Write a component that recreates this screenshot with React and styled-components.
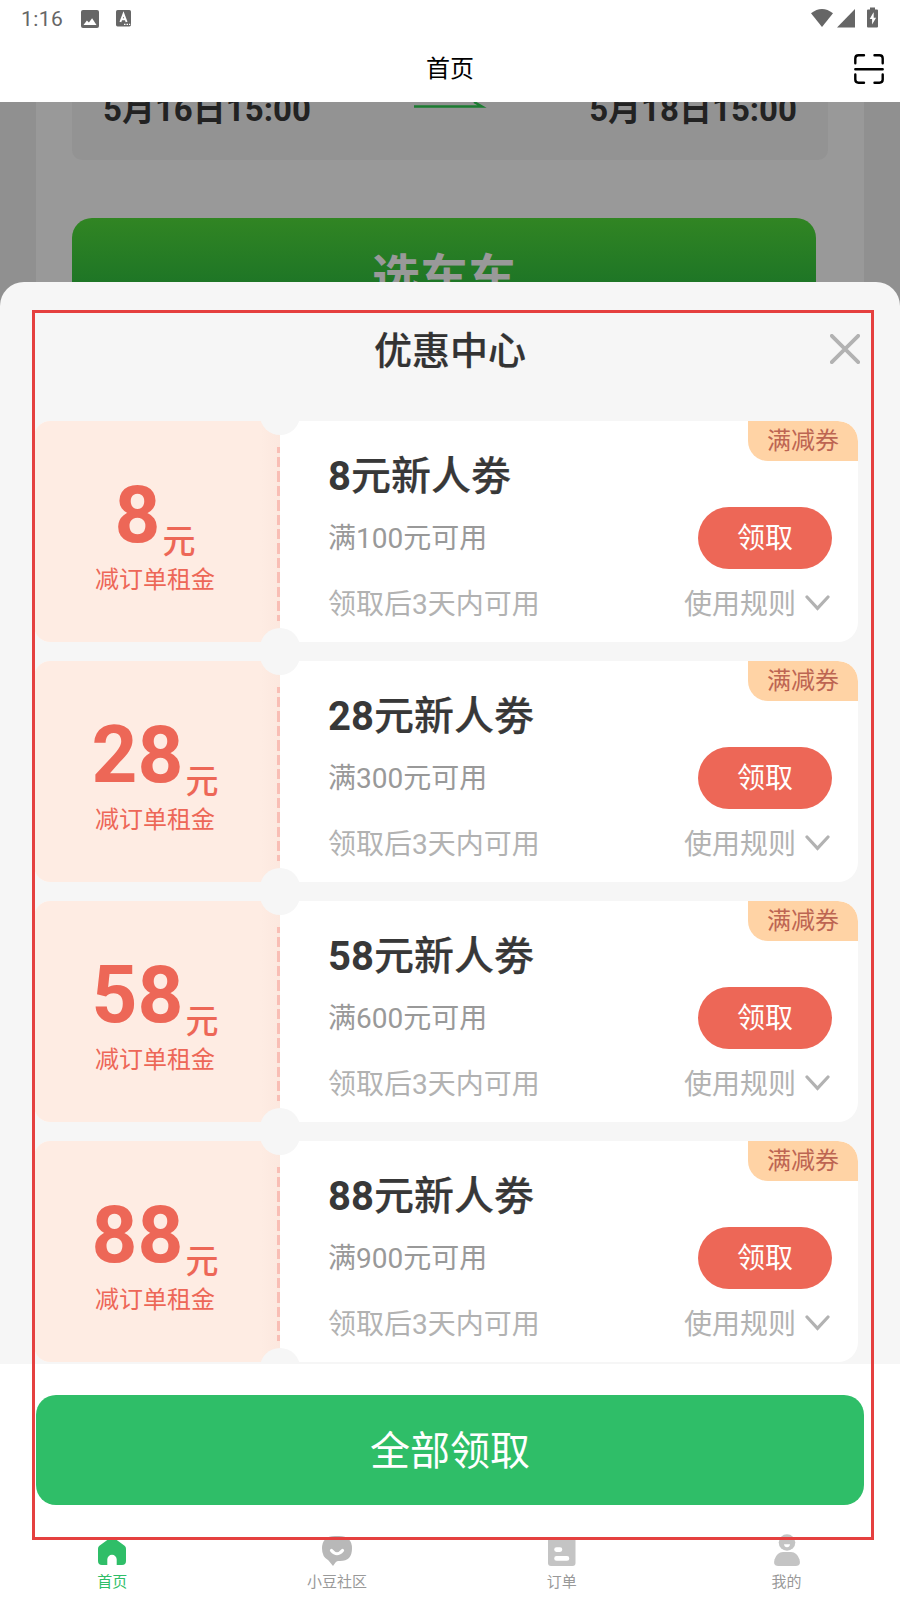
import styled, { createGlobalStyle } from "styled-components";

const GlobalStyle = createGlobalStyle`
  * {
    box-sizing: border-box;
  }

  body {
    margin: 0;
    font-family: Roboto, "Noto Sans CJK SC", sans-serif;
  }
`;

const Phone = styled.div`
  position: relative;
  display: flex;
  flex-direction: column;
  width: 900px;
  height: 1600px;
  overflow: hidden;
  background-color: white;
`;

const StatusBar = styled.div`
  display: flex;
  align-items: center;
  justify-content: space-between;
  height: 37px;
  padding: 0 21px;
  color: #666;
  font-size: 21px;
  letter-spacing: 0.4px;

  .group {
    display: flex;
    align-items: center;
    gap: 17px;
  }

  svg {
    display: block;
  }

  > svg {
    margin-top: -2px;
  }

  .group span {
    margin-right: 1px;
  }
`;

const NavBar = styled.div`
  display: grid;
  grid-template-columns: 1fr auto 1fr;
  align-items: center;
  height: 65px;
  padding: 0 16px;

  .title {
    margin-top: -2px;
    font-size: 24px;
    line-height: 64px;
  }

  svg {
    justify-self: end;
    margin-top: -1px;
  }
`;

const Page = styled.div`
  height: 180px;
  padding: 0 36px;
  overflow: hidden;
  background-color: #909090;
`;

const OrderCard = styled.div`
  height: 180px;
  padding: 0 36px;
  background-color: #999;
`;

const DateRow = styled.div`
  display: flex;
  justify-content: space-between;
  width: 756px;
  height: 58px;
  padding: 0 31px;
  border-radius: 0 0 10px 10px;
  background-color: #939393;
  color: #222;
  font-size: 33px;
  font-weight: bold;

  span {
    height: 40px;
    margin-top: -12px;
    line-height: 40px;
  }
`;

const SearchButton = styled.div`
  display: flex;
  justify-content: center;
  width: 744px;
  height: 110px;
  margin-top: 58px;
  border-radius: 20px;
  background: linear-gradient(#318523, #1c7426 72px);
  color: #999;
  font-size: 48px;
  font-weight: bold;
  line-height: 119px;
`;

const SheetWrap = styled.div`
  height: 1082px;
  background: linear-gradient(
    90deg,
    #909090 36px,
    #999 36px,
    #999 864px,
    #909090 864px
  );
`;

const SheetHead = styled.div`
  display: grid;
  grid-template-columns: 1fr auto 1fr;
  align-items: center;
  height: 139px;
  padding: 0 40px 7px;
  border-radius: 24px 24px 0 0;
  background-color: #f6f6f6;
  color: #333;
  font-size: 38px;
  font-weight: 500;

  span {
    margin-top: -2px;
    -webkit-text-stroke: 0.2px currentColor;
  }

  svg {
    justify-self: end;
    margin-top: 2px;
  }
`;

const CouponList = styled.div`
  display: flex;
  flex-direction: column;
  gap: 19px;
  height: 943px;
  padding: 0 42px 0 34px;
  background-color: #f6f6f6;
`;

const Coupon = styled.div`
  position: relative;
  display: flex;
  flex: none;
  height: 221px;
  border-radius: 16px 20px 20px 16px;
  overflow: hidden;
  background-color: white;

  &::before,
  &::after {
    content: "";
    position: absolute;
    left: 226px;
    width: 40px;
    height: 40px;
    border-radius: 50%;
    background-color: #f6f6f6;
  }

  &::before {
    top: -26px;
  }

  &::after {
    bottom: -26px;
  }
`;

const Amount = styled.div`
  display: flex;
  flex-direction: column;
  align-items: center;
  width: 246px;
  padding: 46px 4px 0 0;
  background: linear-gradient(90deg, #feece3 226px, #fce8df 245px);
  color: #ed6757;

  .price {
    display: flex;
    height: 99px;
    font-size: 80px;
    font-weight: bold;
    line-height: 97px;
  }

  .unit {
    padding: 26px 0 0 2px;
    font-size: 33px;
    font-weight: 500;
    line-height: 97px;
  }

  .note {
    font-size: 24px;
    line-height: 28px;
  }
`;

const Perforation = styled.div`
  width: 3px;
  height: 174px;
  margin: 26px 0 0 -3px;
  background: repeating-linear-gradient(
    #f9beb5 0 6px,
    transparent 6px 10px,
    #f9beb5 10px 14.4px
  );
`;

const Detail = styled.div`
  display: flex;
  flex: 1;
  flex-direction: column;
  padding: 28px 26px 0 48px;

  .name {
    height: 54px;
    color: #383838;
    font-size: 40px;
    font-weight: 500;
    line-height: 56px;
    -webkit-text-stroke: 0.2px currentColor;
  }

  .name b {
    font-weight: bold;
    -webkit-text-stroke: 0;
  }
`;

const Line = styled.div`
  display: flex;
  align-items: center;
  justify-content: space-between;
  height: ${(props) => props.$height}px;
  color: ${(props) => props.$color};
  font-size: 28px;

  .text {
    margin-top: -3px;
  }

  .rules {
    display: flex;
    align-items: center;
    gap: 9px;
    margin-top: -4px;
    margin-right: 2px;
  }

  .rules svg {
    margin-top: 3px;
  }
`;

const GetButton = styled.div`
  width: 134px;
  height: 62px;
  border-radius: 31px;
  background-color: #ed6757;
  color: white;
  font-size: 28px;
  line-height: 63px;
  text-align: center;
`;

const Tag = styled.div`
  position: absolute;
  top: 0;
  right: 0;
  width: 110px;
  height: 40px;
  border-radius: 0 20px 0 20px;
  background-color: #ffd3a5;
  color: #bd6552;
  font-size: 24px;
  line-height: 41px;
  text-align: center;
`;

const Footer = styled.div`
  height: 168px;
  padding: 31px 36px 0;
  background-color: white;
`;

const GetAllButton = styled.div`
  height: 110px;
  border-radius: 20px;
  background-color: #2fbe68;
  color: white;
  font-size: 40px;
  line-height: 113px;
  text-align: center;
`;

const TabBar = styled.div`
  display: grid;
  grid-template-columns: repeat(4, 1fr);
  width: 899px;
  height: 68px;
`;

const Tab = styled.div`
  display: flex;
  flex-direction: column;
  align-items: center;
  color: ${(props) => (props.$active ? "#2fbe68" : "#999")};
  font-size: 15px;
  line-height: 20px;

  svg {
    margin-bottom: 4px;
  }
`;

// highlight box drawn over the sheet
const Frame = styled.div`
  position: absolute;
  top: 310px;
  left: 32px;
  width: 842px;
  height: 1230px;
  border: 3px solid #e5403f;
  pointer-events: none;
`;

const coupons = [
  { amount: 8, min: 100 },
  { amount: 28, min: 300 },
  { amount: 58, min: 600 },
  { amount: 88, min: 900 },
];

const ImageIcon = () => (
  <svg width="18" height="18" viewBox="0 0 18 18">
    <rect width="18" height="18" rx="2" fill="#666" />
    <path d="M2.5 15l3.4-4.6 2 2.2 3.2-4.4L15.5 15z" fill="white" />
  </svg>
);

const LetterIcon = () => (
  <svg width="16" height="17" viewBox="0 0 16 17">
    <rect width="15" height="16.4" rx="1.6" fill="#666" />
    <path
      d="M4.4 12L7.5 4l3.1 8M5.5 9.3h4"
      fill="none"
      stroke="white"
      strokeWidth="1.9"
    />
    <path
      d="M8 14.4h1.5M10.5 14.4h1.5M13 14.4h1.2"
      stroke="white"
      strokeWidth="1.4"
    />
  </svg>
);

const SignalIcons = () => (
  <svg width="68" height="22" viewBox="0 0 68 22" fill="#666">
    <path d="M0 6.2Q11-2.4 22 6.2L11 20z" />
    <path d="M44 2V20.500H26z" />
    <path d="M59 0.500h5v2h2q1 0 1 1v16q0 1-1 1h-9q-1 0-1-1V3.500q0-1 1-1h2z" />
    <path d="M62.4 5.500L58.700 12h2.400V17.500l4-6.800h-2.400V5.500z" fill="white" />
  </svg>
);

const ScanIcon = () => (
  <svg
    width="30"
    height="30"
    viewBox="0 0 30 30"
    fill="none"
    stroke="black"
    strokeWidth="2.4"
    strokeLinecap="round"
  >
    <path d="M1.3 9.3V4.5q0-3.2 3.2-3.2H10M20.5 1.3h5q3.2 0 3.2 3.2V9.3M28.7 20.5v5q0 3.2-3.2 3.2H20.5M10 28.7H4.5q-3.2 0-3.2-3.2V20.5M1.3 15.2h27.4" />
  </svg>
);

const CloseIcon = () => (
  <svg width="30" height="30" viewBox="0 0 30 30">
    <path
      d="M1.8 1.8l26.4 26.4M28.2 1.8L1.8 28.2"
      stroke="#b2b2b2"
      strokeWidth="3.8"
      strokeLinecap="round"
    />
  </svg>
);

const ChevronIcon = () => (
  <svg width="25" height="16" viewBox="0 0 25 16">
    <path
      d="M2 2l10.5 11.4L23 2"
      fill="none"
      stroke="#b2b2b2"
      strokeWidth="3.2"
      strokeLinecap="round"
    />
  </svg>
);

const ArrowIcon = () => (
  <svg width="73" height="7" viewBox="0 0 73 7">
    <path d="M0 4.5h68L60 0" fill="none" stroke="#1c7c32" strokeWidth="2.4" />
  </svg>
);

const tabs = [
  {
    label: "首页",
    icon: (
      <path
        d="M12 6.7L2.4 13.8Q1 15 1 16.800V29q0 4 4 4h5.300v-5.500a4.700 4.700 0 0 1 9.400 0V33H25q4 0 4-4V16.800q0-1.800-1.400-3L18 6.700q-3-2-6 0z"
        fill="#2fbe68"
      />
    ),
  },
  {
    label: "小豆社区",
    icon: (
      <>
        <path
          d="M13 4h4q13 0 13 12.5T18 29h-2q-1.5 0-2.5 1.5L11 34l-4.7-5.8Q0 25 0 16.5Q0 4 13 4z"
          fill="#b8b8b8"
        />
        <path
          d="M9.5 18.5q5.5 6.5 11 0"
          fill="none"
          stroke="white"
          strokeWidth="3.2"
          strokeLinecap="round"
        />
      </>
    ),
  },
  {
    label: "订单",
    icon: (
      <>
        <rect x="1" y="5" width="27.5" height="29" rx="3" fill="#c4c4c4" />
        <path
          d="M9.5 17.6h3.5M9.5 26.4h10.5"
          stroke="white"
          strokeWidth="4.6"
          strokeLinecap="round"
        />
      </>
    ),
  },
  {
    label: "我的",
    icon: (
      <>
        <circle cx="15" cy="10.5" r="8.3" fill="#c4c4c4" />
        <path d="M12 12.3h6q-.3 3-3 3t-3-3z" fill="white" />
        <path
          d="M11 20h8q6 0 8.5 7.5Q29.5 34 24 34H6q-5.5 0-3.5-6.5Q5 20 11 20z"
          fill="#c4c4c4"
        />
      </>
    ),
  },
];

function App() {
  return (
    <Phone>
      <GlobalStyle />
      <StatusBar>
        <div className="group">
          <span>1:16</span>
          <ImageIcon />
          <LetterIcon />
        </div>
        <SignalIcons />
      </StatusBar>
      <NavBar>
        <span />
        <span className="title">首页</span>
        <ScanIcon />
      </NavBar>

      <Page>
        <OrderCard>
          <DateRow>
            <span>5月16日15:00</span>
            <ArrowIcon />
            <span>5月18日15:00</span>
          </DateRow>
          <SearchButton>选车车</SearchButton>
        </OrderCard>
      </Page>

      <SheetWrap>
        <SheetHead>
          <span />
          <span>优惠中心</span>
          <CloseIcon />
        </SheetHead>
        <CouponList>
          {coupons.map((el) => (
            <Coupon key={el.amount}>
              <Amount>
                <div className="price">
                  {el.amount}
                  <span className="unit">元</span>
                </div>
                <div className="note">减订单租金</div>
              </Amount>
              <Perforation />
              <Detail>
                <div className="name">
                  <b>{el.amount}</b>元新人劵
                </div>
                <Line $height={69} $color="#999">
                  <span className="text">满{el.min}元可用</span>
                  <GetButton>领取</GetButton>
                </Line>
                <Line $height={63} $color="#b2b2b2">
                  <span className="text">领取后3天内可用</span>
                  <span className="rules">
                    使用规则
                    <ChevronIcon />
                  </span>
                </Line>
              </Detail>
              <Tag>满减券</Tag>
            </Coupon>
          ))}
        </CouponList>
      </SheetWrap>

      <Footer>
        <GetAllButton>全部领取</GetAllButton>
      </Footer>
      <TabBar>
        {tabs.map((el, idx) => (
          <Tab key={el.label} $active={idx === 0}>
            <svg width="30" height="36" viewBox="0 0 30 36">
              {el.icon}
            </svg>
            {el.label}
          </Tab>
        ))}
      </TabBar>
      <Frame />
    </Phone>
  );
}

export default App;
